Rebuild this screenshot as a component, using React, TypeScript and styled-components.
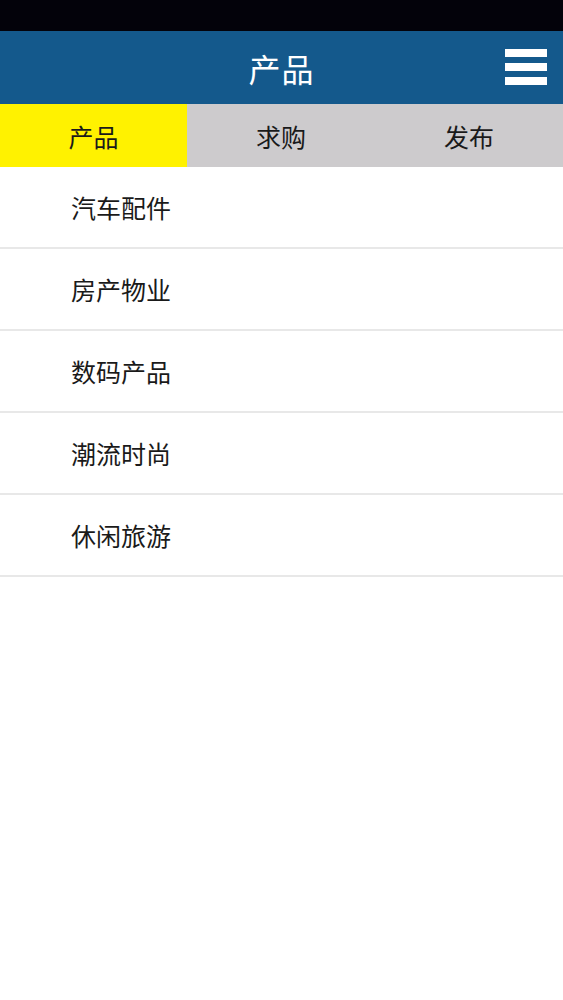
import React, { useState } from 'react';
import styled, { createGlobalStyle } from 'styled-components';

const GlobalStyle = createGlobalStyle`
    html, body {
        margin: 0;
        padding: 0;
        background: #ffffff;
        font-family: "Noto Sans CJK SC", "Noto Sans", sans-serif;
    }
`;

const Page = styled.div`
    width: 100%;
    min-height: 1000px;
    background: #ffffff;
    display: flex;
    flex-direction: column;
`;

const StatusBar = styled.div`
    height: 31px;
    background: #03020a;
`;

const Header = styled.div`
    height: 73px;
    background: #14598c;
    display: flex;
    align-items: center;
    justify-content: center;
    position: relative;
`;

const Title = styled.h1`
    margin: 0;
    color: #ffffff;
    font-size: 32px;
    font-weight: 400;
    letter-spacing: 1px;
`;

const MenuButton = styled.div`
    position: absolute;
    right: 16px;
    top: 18px;
    width: 42px;
    display: flex;
    flex-direction: column;
    gap: 6px;
`;

const MenuBar = styled.span`
    display: block;
    height: 8px;
    background: #ffffff;
`;

const Tabs = styled.div`
    height: 63px;
    background: #cdcbcd;
    display: grid;
    grid-template-columns: 187px 1fr 1fr;
`;

const Tab = styled.div<{ $active: boolean }>`
    display: flex;
    align-items: center;
    justify-content: center;
    background: ${(p) => (p.$active ? '#fff200' : 'transparent')};
    color: #1a1a1a;
    font-size: 25px;
    cursor: pointer;
`;

const List = styled.ul`
    list-style: none;
    margin: 0;
    padding: 0;
`;

const Item = styled.li`
    height: 80px;
    border-bottom: 2px solid #e8e8e8;
    display: flex;
    align-items: center;
    padding-left: 71px;
    font-size: 25px;
    color: #1a1a1a;
`;

const tabs = ['产品', '求购', '发布'];
const items = ['汽车配件', '房产物业', '数码产品', '潮流时尚', '休闲旅游'];

const App = () => {
    const [active, setActive] = useState(0);

    return (
        <Page>
            <GlobalStyle />
            <StatusBar />
            <Header>
                <Title>产品</Title>
                <MenuButton>
                    <MenuBar />
                    <MenuBar />
                    <MenuBar />
                </MenuButton>
            </Header>
            <Tabs>
                {tabs.map((t, i) => (
                    <Tab key={t} $active={i === active} onClick={() => setActive(i)}>
                        {t}
                    </Tab>
                ))}
            </Tabs>
            <List>
                {items.map((it) => (
                    <Item key={it}>{it}</Item>
                ))}
            </List>
        </Page>
    );
};

export default App;
